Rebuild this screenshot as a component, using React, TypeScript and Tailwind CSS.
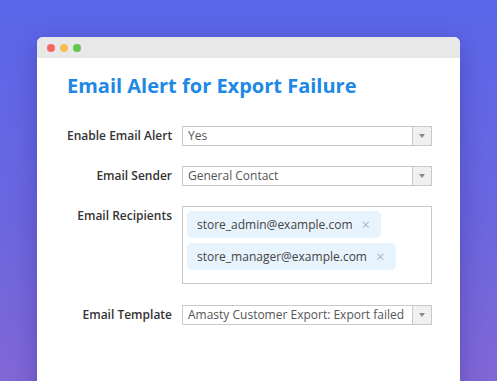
import React from "react";

const font = { fontFamily: '"Open Sans", "Noto Sans", sans-serif' };

function Select({ value }: { value: string }) {
  return (
    <div className="flex h-[20px] w-[250px] border border-[#c9c9c9] bg-white">
      <div className="flex-1 flex items-center pl-[5px] text-[12px] text-[#555] leading-none whitespace-nowrap overflow-hidden">
        {value}
      </div>
      <div className="w-[19px] flex items-center justify-center border-l border-[#c9c9c9] bg-[#f0f0f0]">
        <div className="w-0 h-0 border-l-[3px] border-r-[3px] border-t-[4px] border-l-transparent border-r-transparent border-t-[#8a8a8a]" />
      </div>
    </div>
  );
}

function Chip({ text }: { text: string }) {
  return (
    <div className="flex items-center h-[27px] rounded-[5px] bg-[#e7f3fd] pl-[10px] pr-[11px] w-fit text-[12px] text-[#444] leading-none">
      <span>{text}</span>
      <span className="ml-[9px] text-[15px] font-light text-[#9aa3ab]">×</span>
    </div>
  );
}

function Row({ label, children, top }: { label: string; children: React.ReactNode; top?: boolean }) {
  return (
    <div className={`flex ${top ? "items-start" : "items-center"}`}>
      <div className={`w-[105px] text-right text-[12px] font-semibold text-[#333] leading-none whitespace-nowrap ${top ? "pt-[4px]" : ""}`}>
        {label}
      </div>
      <div className="ml-[10px]">{children}</div>
    </div>
  );
}

export default function App() {
  return (
    <div
      className="w-[497px] h-[381px] overflow-hidden bg-[linear-gradient(180deg,#5a67e9_0%,#6a66e0_55%,#8167d6_100%)] pt-[37px] pl-[37px]"
      style={font}
    >
      <div className="w-[423px] h-[380px] bg-white rounded-t-[6px] shadow-[0_6px_24px_rgba(40,30,120,0.35)] overflow-hidden">
        <div className="h-[21px] bg-[#e8e8e8] flex items-center gap-[5px] pl-[10px]">
          <div className="w-[8px] h-[8px] rounded-full bg-[#ee6a5f]" />
          <div className="w-[8px] h-[8px] rounded-full bg-[#f5c04f]" />
          <div className="w-[8px] h-[8px] rounded-full bg-[#62c654]" />
        </div>
        <div className="pl-[30px] pt-[14px]">
          <h1 className="text-[20px] font-bold text-[#1e88e5] leading-[28px]">
            Email Alert for Export Failure
          </h1>
          <div className="mt-[26px] flex flex-col gap-[20px]">
            <Row label="Enable Email Alert">
              <Select value="Yes" />
            </Row>
            <Row label="Email Sender">
              <Select value="General Contact" />
            </Row>
            <Row label="Email Recipients" top>
              <div className="w-[250px] h-[78px] border border-[#c9c9c9] bg-white p-[4px] flex flex-col gap-[5px]">
                <Chip text="store_admin@example.com" />
                <Chip text="store_manager@example.com" />
              </div>
            </Row>
            <div className="mt-[1px]">
              <Row label="Email Template">
                <Select value="Amasty Customer Export: Export failed" />
              </Row>
            </div>
          </div>
        </div>
      </div>
    </div>
  );
}
